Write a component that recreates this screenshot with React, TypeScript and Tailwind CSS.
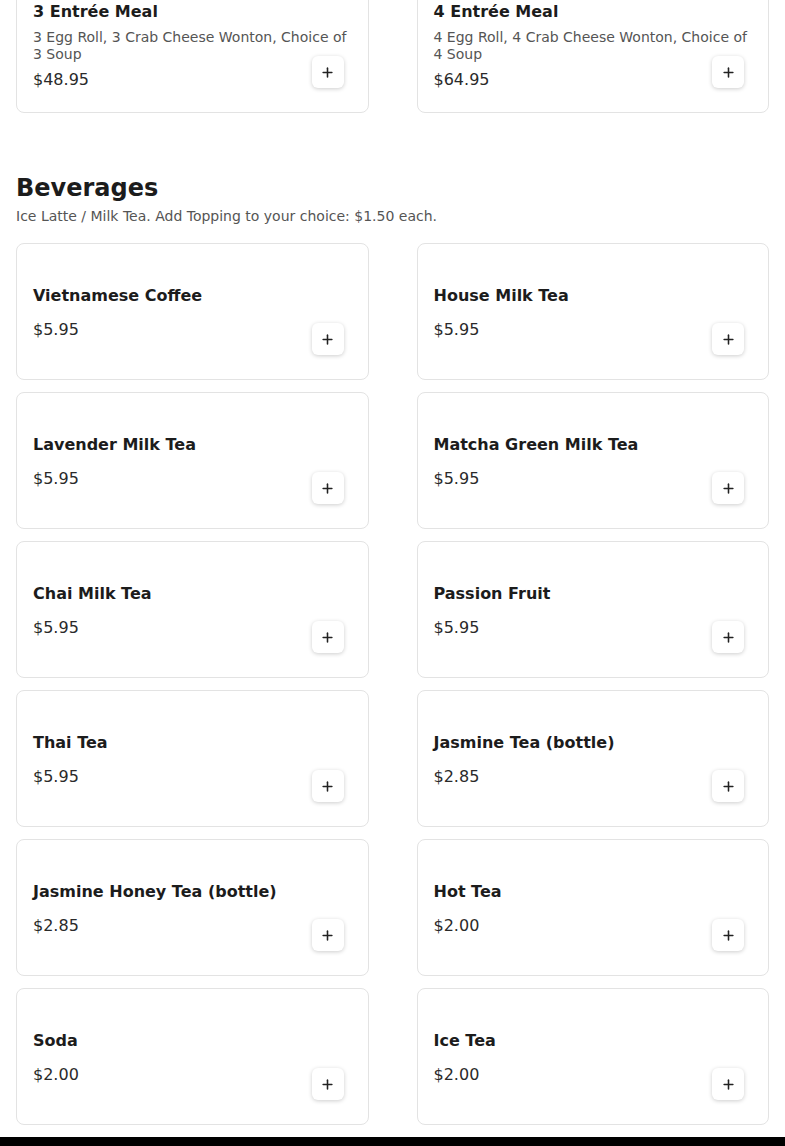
import { Plus } from 'lucide-react';

type Item = {
  name: string;
  description?: string;
  price: string;
};

const entrees: Item[] = [
  {
    name: '3 Entrée Meal',
    description: '3 Egg Roll, 3 Crab Cheese Wonton, Choice of 3 Soup',
    price: '$48.95',
  },
  {
    name: '4 Entrée Meal',
    description: '4 Egg Roll, 4 Crab Cheese Wonton, Choice of 4 Soup',
    price: '$64.95',
  },
];

const beverages: Item[] = [
  { name: 'Vietnamese Coffee', price: '$5.95' },
  { name: 'House Milk Tea', price: '$5.95' },
  { name: 'Lavender Milk Tea', price: '$5.95' },
  { name: 'Matcha Green Milk Tea', price: '$5.95' },
  { name: 'Chai Milk Tea', price: '$5.95' },
  { name: 'Passion Fruit', price: '$5.95' },
  { name: 'Thai Tea', price: '$5.95' },
  { name: 'Jasmine Tea (bottle)', price: '$2.85' },
  { name: 'Jasmine Honey Tea (bottle)', price: '$2.85' },
  { name: 'Hot Tea', price: '$2.00' },
  { name: 'Soda', price: '$2.00' },
  { name: 'Ice Tea', price: '$2.00' },
];

function MenuCard({ item }: { item: Item }) {
  return (
    <div className="relative flex h-[137px] items-center rounded-lg border border-[#e3e3e3] bg-white px-4 pt-[17px] pb-[15px]">
      <div className="flex flex-col">
        <h3 className="text-base leading-6 font-bold text-[#1c1c1c]">{item.name}</h3>
        {item.description ? (
          <p className="mt-[5px] text-sm leading-[17px] text-[#555]">{item.description}</p>
        ) : null}
        <p className={`${item.description ? 'mt-[5px]' : 'mt-2.5'} text-base leading-6 text-[#2a2a2a]`}>
          {item.price}
        </p>
      </div>
      <button className="absolute right-6 bottom-6 flex h-8 w-8 items-center justify-center rounded-md bg-white text-[#222] shadow-[0_1px_4px_rgba(0,0,0,0.2)]">
        <Plus size={15} strokeWidth={2.5} />
      </button>
    </div>
  );
}

export default function App() {
  return (
    <div className="min-h-[1146px] bg-white font-['DejaVu_Sans',sans-serif]">
      <div className="-mt-[24px] grid grid-cols-2 gap-x-12 gap-y-3 px-4">
        {entrees.map((item) => (
          <MenuCard key={item.name} item={item} />
        ))}
      </div>

      <section className="px-4 pt-[59px] pb-3">
        <h2 className="text-2xl leading-8 font-bold text-[#1c1c1c]">Beverages</h2>
        <p className="mt-0.5 text-sm leading-5 text-[#555]">
          Ice Latte / Milk Tea. Add Topping to your choice: $1.50 each.
        </p>
        <div className="mt-[17px] grid grid-cols-2 gap-x-12 gap-y-3">
          {beverages.map((item) => (
            <MenuCard key={item.name} item={item} />
          ))}
        </div>
      </section>

      <footer className="h-24 bg-black" />
    </div>
  );
}
